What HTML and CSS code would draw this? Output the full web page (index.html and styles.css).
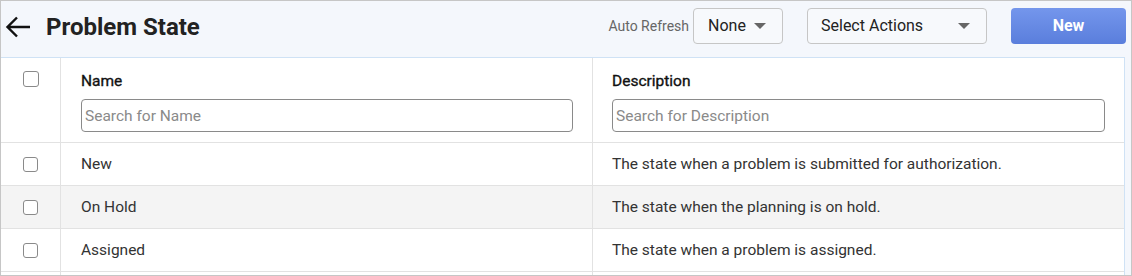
FILE: index.html
```html
<!DOCTYPE html>
<html>
<head>
<meta charset="utf-8">
<link rel="stylesheet" href="styles.css">
</head>
<body>
<div class="frame">
  <div class="topbar">
    <div class="title-wrap">
      <svg class="back" width="26" height="22" viewBox="0 0 26 22"><path d="M25 11H2.5M12 1.5L2.5 11L12 20.5" fill="none" stroke="#111" stroke-width="2.4"/></svg>
      <h1 class="title">Problem State</h1>
    </div>
    <div class="actions">
      <span class="ar-label">Auto Refresh</span>
      <div class="select sel-none"><span>None</span><span class="caret"></span></div>
      <div class="select sel-actions"><span>Select Actions</span><span class="caret"></span></div>
      <button class="btn-new">New</button>
    </div>
  </div>
  <div class="table-wrap">
    <div class="table">
      <div class="row head">
        <div class="c-check"><span class="cb"></span></div>
        <div class="c-name">
          <div class="h-label">Name</div>
          <input class="search" placeholder="Search for Name">
        </div>
        <div class="c-desc">
          <div class="h-label">Description</div>
          <input class="search" placeholder="Search for Description">
        </div>
      </div>
      <div class="row">
        <div class="c-check"><span class="cb"></span></div>
        <div class="c-name">New</div>
        <div class="c-desc">The state when a problem is submitted for authorization.</div>
      </div>
      <div class="row alt">
        <div class="c-check"><span class="cb"></span></div>
        <div class="c-name">On Hold</div>
        <div class="c-desc">The state when the planning is on hold.</div>
      </div>
      <div class="row">
        <div class="c-check"><span class="cb"></span></div>
        <div class="c-name">Assigned</div>
        <div class="c-desc">The state when a problem is assigned.</div>
      </div>
      <div class="row">
        <div class="c-check"></div>
        <div class="c-name"></div>
        <div class="c-desc"></div>
      </div>
    </div>
  </div>
</div>
</body>
</html>
```
FILE: styles.css
```css
* { box-sizing: border-box; }
html, body { margin: 0; padding: 0; }
body { font-family: Roboto, "Liberation Sans", sans-serif; background: #f4f7fc; }
.frame {
  width: 1132px; height: 276px;
  border: 1px solid #c6c6c6;
  background: #f4f7fc;
  overflow: hidden;
}
.topbar {
  height: 56px;
  display: flex;
  align-items: center;
  justify-content: space-between;
  padding: 0 5px 0 5px;
}
.title-wrap { display: flex; align-items: center; margin-top: -5px; }
.back { margin-left: -1px; margin-right: 15px; }
.title {
  margin: 0;
  font-size: 24px;
  font-weight: 700;
  color: #222;
  letter-spacing: 0;
}
.actions { display: flex; align-items: center; margin-top: -7px; }
.ar-label { font-size: 14px; color: #666; margin-right: 4px; }
.select {
  height: 36px;
  border: 1px solid #c6c6c6;
  border-radius: 4px;
  display: flex;
  align-items: center;
  justify-content: space-between;
  font-size: 16px;
  color: #222;
  background: #f7f9fc;
}
.sel-none { width: 90px; padding: 0 16px 0 14px; }
.sel-actions { width: 180px; padding: 0 16px 0 13px; margin-left: 24px; }
.caret {
  width: 0; height: 0;
  border-left: 6px solid transparent;
  border-right: 6px solid transparent;
  border-top: 6px solid #666;
}
.btn-new {
  margin-left: 24px;
  width: 115px; height: 36px;
  border: none;
  border-radius: 4px;
  background: linear-gradient(#7496ec, #5a7edc);
  color: #fff;
  font-family: Roboto, sans-serif;
  font-weight: 700;
  font-size: 16px;
}
.table-wrap { padding-right: 6px; }
.table {
  background: #fff;
  border-top: 1px solid #cfe2f5;
  border-right: 1px solid #cfe2f5;
  width: 1124px;
}
.row {
  display: grid;
  grid-template-columns: 60px 532px 1fr;
  height: 43px;
  border-bottom: 1px solid #e2e2e2;
  font-size: 15.5px;
  color: #333;
}
.row.alt { background: #f4f4f4; }
.row.head { height: 85px; color: #111; }
.row > div { display: flex; align-items: center; }
.c-check { justify-content: center; border-right: 1px solid #e2e2e2; }
.c-name { border-right: 1px solid #e2e2e2; padding-left: 20px; }
.c-desc { padding-left: 19px; }
.head .c-check { align-items: flex-start; padding-top: 13px; }
.head .c-name, .head .c-desc {
  flex-direction: column;
  align-items: flex-start;
  justify-content: flex-start;
  padding-top: 13px;
}
.head .c-name { padding-right: 19px; }
.head .c-desc { padding-right: 19px; }
.h-label {
  font-size: 15.5px;
  font-weight: 400;
  -webkit-text-stroke: 0.35px #111;
  line-height: 20px;
  color: #111;
}
.search {
  margin-top: 8px;
  width: 100%;
  height: 33px;
  border: 1px solid #8a8a8a;
  border-radius: 4px;
  padding: 0 3px;
  font-family: Roboto, sans-serif;
  font-size: 15.5px;
  background: #fff;
}
.search::placeholder { color: #8a8a8a; }
.cb {
  display: block;
  width: 15px; height: 15px;
  border: 1.5px solid #8a8a8a;
  border-radius: 3px;
  background: #fff;
}
.head .cb { width: 16px; height: 16px; }
```
